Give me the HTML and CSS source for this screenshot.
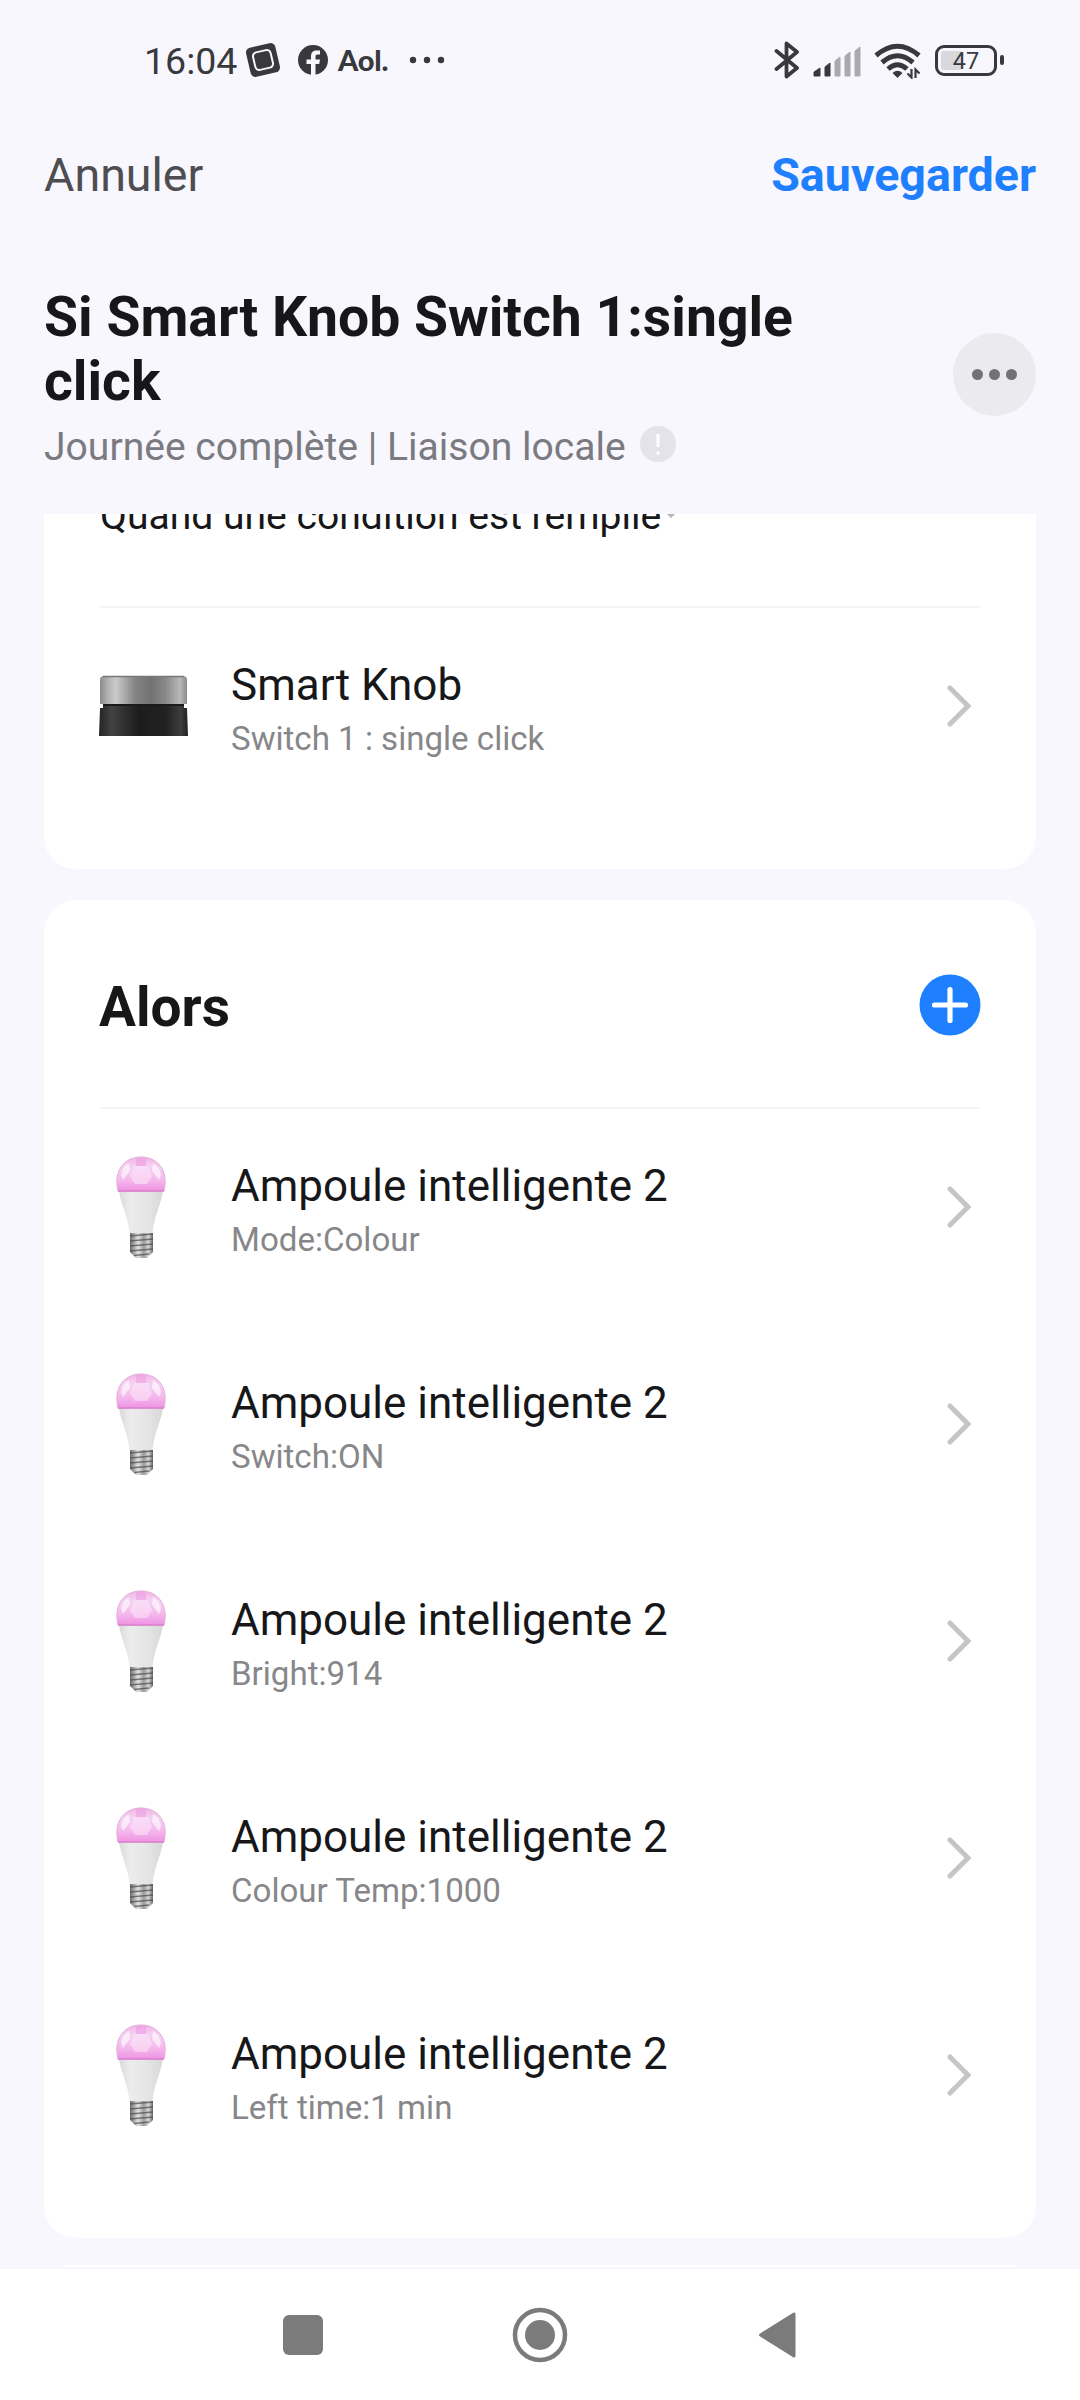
FILE: index.html
```html
<!DOCTYPE html>
<html lang="fr">
<head>
<meta charset="utf-8">
<title>Scène</title>
<link rel="stylesheet" href="styles.css">
</head>
<body>
<svg class="defs" width="0" height="0" aria-hidden="true">
  <defs>
    <linearGradient id="dome" x1="0" y1="0" x2="0" y2="1">
      <stop offset="0" stop-color="#efb4e6"/><stop offset=".3" stop-color="#f5d3f2"/><stop offset=".68" stop-color="#f4b8ec"/><stop offset="1" stop-color="#f092e3"/>
    </linearGradient>
    <linearGradient id="body" x1="0" x2="1">
      <stop offset="0" stop-color="#d9d9d9"/><stop offset=".25" stop-color="#ececec"/><stop offset=".6" stop-color="#e6e6e6"/><stop offset="1" stop-color="#d8d8d8"/>
    </linearGradient>
    <linearGradient id="screw" x1="0" x2="1">
      <stop offset="0" stop-color="#6c6c6c"/><stop offset=".35" stop-color="#e4e4e4"/><stop offset=".6" stop-color="#9c9c9c"/><stop offset=".8" stop-color="#d8d8d8"/><stop offset="1" stop-color="#666"/>
    </linearGradient>
    <linearGradient id="metal" x1="0" x2="1">
      <stop offset="0" stop-color="#8a8a8a"/><stop offset=".07" stop-color="#aaa"/><stop offset=".18" stop-color="#cbcbcb"/><stop offset=".4" stop-color="#858585"/><stop offset=".58" stop-color="#727272"/><stop offset=".75" stop-color="#888"/><stop offset=".92" stop-color="#b8b8b8"/><stop offset="1" stop-color="#8a8a8a"/>
    </linearGradient>
    <linearGradient id="base" x1="0" x2="1">
      <stop offset="0" stop-color="#252525"/><stop offset=".14" stop-color="#424242"/><stop offset=".45" stop-color="#1c1c1c"/><stop offset=".75" stop-color="#222"/><stop offset=".92" stop-color="#3c3c3c"/><stop offset="1" stop-color="#222"/>
    </linearGradient>
    <symbol id="bulb" viewBox="0 0 50 104">
      <path d="M3 35 H47 C45 49 38 60 36.500 77 H13.500 C12 60 5 49 3 35Z" fill="url(#body)"/>
      <path d="M2 35 C-3 14 9 1 25 1 S53 14 48 35Z" fill="url(#dome)" stroke="#e3abd9" stroke-width="1"/>
      <path d="M18 10 H32 L36 20 L31 28 H19 L14 20Z" fill="#fbe3f9" opacity=".6"/>
      <path d="M20 2 H30 V10 H20Z" fill="#ee9ee3" opacity=".6"/>
      <path d="M5 19 Q7 10 13 7 L14 15 L7 24Z M45 19 Q43 10 37 7 L36 15 L43 24Z" fill="#fff" opacity=".6"/>
      <path d="M2 35H48" stroke="#da7ecf" stroke-width="1.300"/>
      <path d="M14 77 H37 V96 L31 102 H20 L14 96Z" fill="url(#screw)"/>
      <path d="M14 80 37 78 M14 85 37 83 M14 90 37 88 M14 95 37 93 M18 99.500 33 98" stroke="#4b4b4b" stroke-width="1.500" opacity=".7"/>
    </symbol>
    <symbol id="chevron" viewBox="0 0 24 42">
      <path d="M3 3 21 21 3 39" fill="none" stroke="#c5c5c5" stroke-width="5" stroke-linecap="round" stroke-linejoin="miter"/>
    </symbol>
  </defs>
</svg>

<div class="screen">
  <header class="status">
    <div class="status-left">
      <span class="clock">16:04</span>
      <svg class="app-icon" width="36" height="36" viewBox="0 0 36 36"><g transform="rotate(-13 18 18)"><rect x="3" y="3" width="30" height="30" rx="5" fill="#39393d"/><rect x="9" y="9" width="18" height="18" rx="4" fill="none" stroke="#f7f7fd" stroke-width="2"/></g></svg>
      <svg class="facebook" width="30" height="30" viewBox="0 0 30 30"><circle cx="15" cy="15" r="15" fill="#39393d"/><path d="M13 30V19H8.500v-4.500H13v-3c0-4.500 2.500-6 5.500-6h3.500v4h-2.200c-1.700 0-2.300.9-2.300 2.300v2.700H22l-.8 4.500h-3.700V30z" fill="#f7f7fd"/></svg>
      <span class="aol">Aol.</span>
      <svg class="overflow" width="36" height="8" viewBox="0 0 36 8" fill="#39393d"><circle cx="4" cy="4" r="3.200"/><circle cx="18" cy="4" r="3.200"/><circle cx="32" cy="4" r="3.200"/></svg>
    </div>
    <div class="status-right">
      <svg class="bluetooth" width="26" height="38" viewBox="0 0 26 38"><path d="M2.500 10 23 27 12.500 35.500V2.500L23 11 2.500 28" fill="none" stroke="#39393d" stroke-width="3.800" stroke-linejoin="round" stroke-linecap="round"/></svg>
      <svg class="signal" width="50" height="32" viewBox="0 0 50 32"><path d="M1 31v-4l6-4v8z M12 31v-9l5-4v13z" fill="#39393d" stroke="#39393d" stroke-width="1" stroke-linejoin="round"/><path d="M22 31v-15l5-4v19z M32 31v-20l5-4v24z M42 31V6l5-4v29z" fill="#a9a9ae" stroke="#a9a9ae" stroke-linejoin="round"/></svg>
      <svg class="wifi" width="48" height="36" viewBox="0 0 48 36"><g fill="none" stroke="#39393d" stroke-width="5"><path d="M2 12.500Q23.500-6 45 12.500"/><path d="M8 19.500Q23.500 6 39 19.500"/><path d="M14 26Q23.500 17.500 33 26"/></g><path d="M18.500 30Q23.500 25.500 28.500 30L23.500 35Z" fill="#39393d"/><path d="M37.500 26v8.500l-4-4 M41.500 35v-8.500l4 4" fill="none" stroke="#39393d" stroke-width="2.200"/></svg>
      <div class="battery"><span class="battery-fill"></span><span class="battery-text">47</span></div>
      <span class="battery-tip"></span>
    </div>
  </header>

  <nav class="actions">
    <span class="cancel">Annuler</span>
    <span class="save">Sauvegarder</span>
  </nav>

  <section class="heading">
    <div class="heading-text">
      <h1>Si Smart Knob Switch 1:single<br>click</h1>
      <p><span class="meta">Journée complète | Liaison locale</span>
        <svg width="36" height="36" viewBox="0 0 36 36"><circle cx="18" cy="18" r="18" fill="#e3e3e9"/><path d="M18 8v13M18 25.500v3" stroke="#fff" stroke-width="3"/></svg></p>
    </div>
    <div class="more"><i></i><i></i><i></i></div>
  </section>

  <main class="scroll">
    <section class="card card-if">
      <div class="condition"><span>Quand une condition est remplie</span><svg width="12" height="4" viewBox="0 0 12 4"><path d="M2 0h8L6 4z" fill="#b5b5b5"/></svg></div>
      <div class="list">
        <div class="row">
          <div class="thumb"><svg width="90" height="62" viewBox="0 0 90 62"><path d="M1 5Q1 1 5 1H84Q88 1 88 5V29H1Z" fill="url(#metal)"/><path d="M4 1.500H85" stroke="#777" stroke-width="1.500"/><path d="M4 29H85V33H88L89 61H0L1 33H4Z" fill="url(#base)"/><path d="M4 30H85" stroke="#1a1a1a" stroke-width="2"/></svg></div>
          <div class="text"><span class="name">Smart Knob</span><span class="sub">Switch 1 : single click</span></div>
          <svg class="chev"><use href="#chevron"/></svg>
        </div>
      </div>
    </section>

    <section class="card card-then">
      <div class="card-head"><h2>Alors</h2>
        <svg width="62" height="62" viewBox="0 0 62 62"><circle cx="31" cy="31" r="30.500" fill="#1f80ff"/><path d="M31 15.500v31M15.500 31h31" stroke="#fff" stroke-width="5.200" stroke-linecap="round"/></svg></div>
      <div class="list">
        <div class="row"><div class="thumb bulb"><svg width="50" height="104"><use href="#bulb"/></svg></div><div class="text"><span class="name">Ampoule intelligente 2</span><span class="sub">Mode:Colour</span></div><svg class="chev"><use href="#chevron"/></svg></div>
        <div class="row"><div class="thumb bulb"><svg width="50" height="104"><use href="#bulb"/></svg></div><div class="text"><span class="name">Ampoule intelligente 2</span><span class="sub">Switch:ON</span></div><svg class="chev"><use href="#chevron"/></svg></div>
        <div class="row"><div class="thumb bulb"><svg width="50" height="104"><use href="#bulb"/></svg></div><div class="text"><span class="name">Ampoule intelligente 2</span><span class="sub">Bright:914</span></div><svg class="chev"><use href="#chevron"/></svg></div>
        <div class="row"><div class="thumb bulb"><svg width="50" height="104"><use href="#bulb"/></svg></div><div class="text"><span class="name">Ampoule intelligente 2</span><span class="sub">Colour Temp:1000</span></div><svg class="chev"><use href="#chevron"/></svg></div>
        <div class="row"><div class="thumb bulb"><svg width="50" height="104"><use href="#bulb"/></svg></div><div class="text"><span class="name">Ampoule intelligente 2</span><span class="sub">Left time:1 min</span></div><svg class="chev"><use href="#chevron"/></svg></div>
      </div>
    </section>

    <div class="next-edge"></div>
  </main>

  <footer class="navbar">
    <svg width="40" height="40" viewBox="0 0 40 40"><rect width="40" height="40" rx="6" fill="#7b7b7b"/></svg>
    <svg width="56" height="56" viewBox="0 0 56 56"><circle cx="28" cy="28" r="25" fill="none" stroke="#7b7b7b" stroke-width="4.500"/><circle cx="28" cy="28" r="15" fill="#7b7b7b"/></svg>
    <svg width="40" height="48" viewBox="0 0 40 48"><path d="M37 3V45L3.500 24Z" fill="#7b7b7b" stroke="#7b7b7b" stroke-width="3" stroke-linejoin="round"/></svg>
  </footer>
</div>
</body>
</html>
```
FILE: styles.css
```css
* { box-sizing: border-box; }
body { margin: 0; background: #f7f7fd; font-family: Roboto, "Noto Sans", sans-serif; color: #17171a; }
.defs { position: absolute; }
svg { display: block; flex: none; }
h1, h2, p { margin: 0; }
.screen { width: 1080px; height: 2400px; display: flex; flex-direction: column; overflow: hidden; }

.status { height: 120px; display: flex; justify-content: space-between; padding: 0 76px 0 144px; color: #39393d; }
.status-left, .status-right { display: flex; align-items: center; height: 120px; }
.clock { font-size: 37.5px; line-height: 44px; width: 95px; margin-top: 2px; white-space: nowrap; }
.app-icon { margin-left: 6px; }
.facebook { margin-left: 17px; }
.aol { font: 900 29px/32px Lato, sans-serif; margin-left: 10px; width: 52px; letter-spacing: -.2px; white-space: nowrap; }
.overflow { margin-left: 19px; }
.bluetooth { margin-right: 13px; }
.signal { margin-right: 11px; margin-top: 2px; }
.wifi { margin-right: 13px; margin-top: 1px; }
.battery { width: 62px; height: 31px; border: 3px solid #39393d; border-radius: 9px; padding: 3px; display: grid; }
.battery-fill { grid-area: 1 / 1; width: 21px; height: 19px; border-radius: 3px; background: #d8d8dd; }
.battery-text { grid-area: 1 / 1; text-align: center; font-size: 23.5px; line-height: 20px; }
.battery-tip { width: 4px; height: 10px; border-radius: 2px; background: #39393d; margin-left: 3px; }

.actions { height: 110px; display: flex; justify-content: space-between; align-items: center; padding: 0 44px; font-size: 46.6px; line-height: 54px; }
.cancel { color: #4e4e52; }
.save { color: #1f80ff; font-weight: 700; }

.heading { height: 284px; display: flex; justify-content: space-between; padding: 56px 44px 0; }
.heading h1 { font-size: 55.3px; line-height: 64px; font-weight: 700; white-space: nowrap; }
.heading p { display: flex; align-items: center; gap: 14px; height: 48px; margin-top: 9px; font-size: 39.1px; line-height: 48px; color: #7a7a80; }
.meta { white-space: nowrap; }
.heading p svg { margin-top: -7px; }
.more { width: 83px; height: 83px; margin-top: 47px; border-radius: 50%; background: #eaeaef; display: flex; align-items: center; justify-content: center; gap: 6px; }
.more i { width: 11px; height: 11px; border-radius: 50%; background: #727276; }

.scroll { height: 1755px; overflow: hidden; padding: 0 44px; display: flex; flex-direction: column; }
.card { background: #fff; border-radius: 32px; padding: 0 56px; flex: none; }
.card-if { height: 355px; border-radius: 0 0 32px 32px; margin-bottom: 31px; }
.condition { height: 92px; overflow: hidden; display: flex; align-items: flex-start; gap: 4px; font-size: 39.1px; line-height: 50px; white-space: nowrap; }
.condition span { margin-top: -23px; }
.card-then { height: 1338px; }
.card-head { height: 207px; display: flex; justify-content: space-between; align-items: center; }
.card-head h2 { font-size: 55px; line-height: 64px; font-weight: 700; margin: 7px 0 0 -1px; }
.card-head svg { margin: 2px -1px 0 0; }
.list { border-top: 2px solid #f4f4f4; display: flex; flex-direction: column; gap: 19px; }
.row { height: 198px; display: flex; align-items: center; margin-top: -1px; margin-bottom: 1px; }
.thumb { width: 88px; flex: none; margin-right: 43px; }
.thumb svg { margin: 0 0 0 -1px; }
.thumb.bulb svg { margin: 1px 0 0 16px; }
.text { flex: 1; display: flex; flex-direction: column; gap: 7px; padding-top: 4px; white-space: nowrap; }
.name { font-size: 44px; line-height: 54px; }
.sub { font-size: 33.1px; line-height: 40px; color: #87878a; }
.chev { width: 24px; height: 42px; margin-right: 9px; }
.next-edge { height: 2px; margin: 27px 20px 0; background: #fff; flex: none; }

.navbar { height: 131px; background: #fff; display: flex; justify-content: center; align-items: center; padding-top: 1px; }
.navbar svg:nth-child(2) { margin: 0 189px; }
```
